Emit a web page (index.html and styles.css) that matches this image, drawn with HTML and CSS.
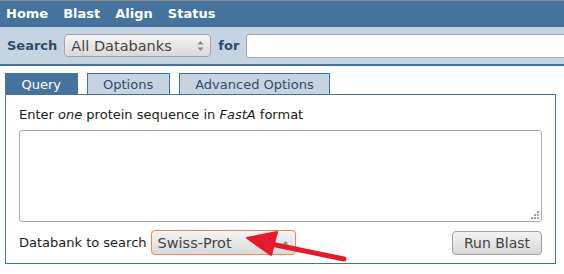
FILE: index.html
```html
<!DOCTYPE html>
<html lang="en">

<head>
    <meta charset="UTF-8" />
    <title>Blast</title>
    <link rel="stylesheet" href="styles.css">
</head>

<body>
    <div class="menu">
        <a href="#">Home</a>
        <a href="#">Blast</a>
        <a href="#">Align</a>
        <a href="#">Status</a>
    </div>

    <div class="search-bar">
        <label>Search</label>
        <div class="select db-all">
            <span>All Databanks</span>
            <svg width="7" height="12" viewBox="0 0 7 12"><path d="M0.5 4.5 L3.5 1 L6.5 4.5 Z M0.5 7.5 L3.5 11 L6.5 7.5 Z" fill="#8a8a8a"/></svg>
        </div>
        <label>for</label>
        <input type="text" class="query-input" />
    </div>

    <div class="main">
        <div class="tabs">
            <div class="tab active">Query</div>
            <div class="tab">Options</div>
            <div class="tab">Advanced Options</div>
        </div>

        <div class="panel">
            <p class="hint">Enter <em>one</em> protein sequence in <em>FastA</em> format</p>
            <textarea class="sequence"></textarea>
            <div class="run-row">
                <label>Databank to search</label>
                <div class="select db-pick">
                    <span>Swiss-Prot</span>
                    <svg width="7" height="5" viewBox="0 0 7 5"><path d="M0.5 4.5 L3.5 1 L6.5 4.5 Z" fill="#8a8a8a"/></svg>
                </div>
                <button class="run-btn">Run Blast</button>
            </div>
        </div>
    </div>

    <svg class="pointer" width="564" height="274" viewBox="0 0 564 274">
        <line x1="266" y1="243" x2="344" y2="259" stroke="#e31b2d" stroke-width="5" stroke-linecap="round"/>
        <polygon points="247,238 277,232 271,255" fill="#e31b2d" stroke="#e31b2d" stroke-width="2" stroke-linejoin="round"/>
    </svg>
</body>

</html>
```

FILE: styles.css
```css
body {
    font-family: "DejaVu Sans", sans-serif;
    font-size: 13px;
    margin: 0;
    color: #1a1a1a;
    background: #ffffff;
    overflow: hidden;
    position: relative;
    width: 564px;
    height: 274px;
}

.menu {
    border-top: 1px solid #8a8a8a;
    background-color: #45739d;
    height: 26px;
    line-height: 26px;
    padding-left: 6px;
    display: flex;
    gap: 15px;
}

.menu a {
    color: #ffffff;
    font-weight: bold;
    text-decoration: none;
}

.search-bar {
    background-color: #c6d4e1;
    height: 37px;
    border-bottom: 2px solid #45739d;
    display: flex;
    align-items: center;
    gap: 7px;
    padding-left: 7px;
}

.search-bar label {
    font-weight: bold;
    color: #2c4d6d;
    flex-shrink: 0;
}

.select {
    box-sizing: border-box;
    flex-shrink: 0;
    display: flex;
    align-items: center;
    justify-content: space-between;
    padding: 0 6px;
    border-radius: 4px;
    font-size: 14.5px;
    color: #444444;
    background: linear-gradient(#f4f4f4, #d9d9d9);
}

.db-all {
    width: 147px;
    height: 23px;
    border: 1px solid #a5a5a5;
}

.db-pick {
    width: 145px;
    height: 25px;
    border: 1px solid #e38d5c;
    box-shadow: 0 0 1px #f0b08a;
}

.query-input {
    box-sizing: border-box;
    height: 24px;
    width: 340px;
    flex-shrink: 0;
    border: 1px solid #a8a8a8;
    border-radius: 3px;
    background: #ffffff;
}

.main {
    padding: 7px 8px 0 5px;
}

.tabs {
    display: flex;
    gap: 9px;
}

.tab {
    height: 21px;
    line-height: 22px;
    padding: 0 15.5px;
    border: 1px solid #45739d;
    border-bottom: none;
    box-sizing: border-box;
    background-color: #c6d4e1;
    color: #2c4d6d;
}

.tab.active {
    background-color: #45739d;
    color: #ffffff;
}

.panel {
    border: 1px solid #45739d;
    padding: 12px 13px 8px 13px;
    height: 148px;
}

.hint {
    margin: 0;
    line-height: 16px;
}

/* resize grip drawn as a triangle of dots */
.sequence {
    display: block;
    box-sizing: border-box;
    width: 523px;
    height: 92px;
    margin-top: 7px;
    border: 1px solid #acacac;
    border-radius: 3px;
    resize: none;
    background-color: #ffffff;
    background-repeat: no-repeat;
    background-size: 2px 2px;
    background-image:
        linear-gradient(#a0a0a0, #a0a0a0),
        linear-gradient(#a0a0a0, #a0a0a0),
        linear-gradient(#a0a0a0, #a0a0a0),
        linear-gradient(#a0a0a0, #a0a0a0),
        linear-gradient(#a0a0a0, #a0a0a0),
        linear-gradient(#a0a0a0, #a0a0a0);
    background-position:
        right 2px bottom 2px,
        right 5px bottom 2px,
        right 8px bottom 2px,
        right 2px bottom 5px,
        right 5px bottom 5px,
        right 2px bottom 8px;
}

.run-row {
    display: flex;
    align-items: center;
    gap: 4px;
    margin-top: 8px;
    height: 25px;
}

.run-btn {
    margin-left: auto;
    width: 90px;
    height: 24px;
    font-family: "DejaVu Sans", sans-serif;
    font-size: 14px;
    color: #444444;
    border: 1px solid #a0a0a0;
    border-radius: 4px;
    background: linear-gradient(#f4f4f4, #d6d6d6);
    padding: 0;
}

.pointer {
    position: absolute;
    left: 0;
    top: 0;
    pointer-events: none;
}
```
